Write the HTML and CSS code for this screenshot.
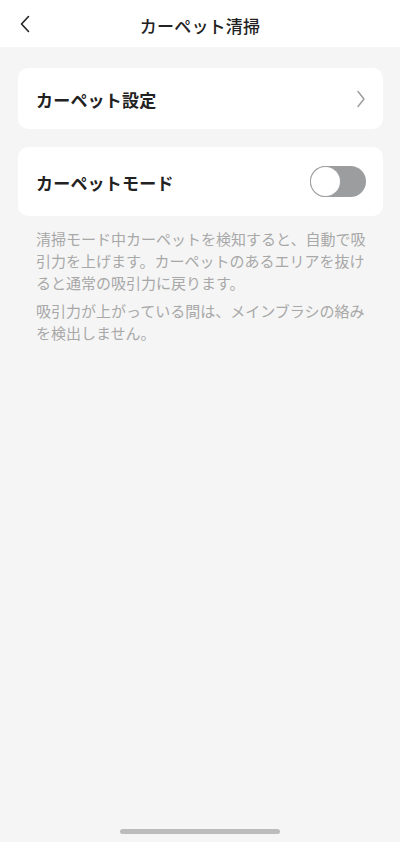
FILE: index.html
```html
<!DOCTYPE html>
<html lang="ja">
<head>
    <meta charset="UTF-8">
    <meta name="viewport" content="width=device-width, initial-scale=1.0">
    <title>カーペット清掃</title>
    <link rel="stylesheet" href="styles.css">
</head>
<body>

    <div class="screen">
        <header class="topbar">
            <span class="back">
                <svg width="12" height="18" viewBox="0 0 12 18">
                    <path d="M9.5 1.5 L2.5 9 L9.5 16.5" fill="none" stroke="#222" stroke-width="1.6" stroke-linecap="round" stroke-linejoin="round"/>
                </svg>
            </span>
            <h1>カーペット清掃</h1>
        </header>

        <main class="content">
            <div class="card card-link">
                <span class="card-label">カーペット設定</span>
                <svg class="arrow" width="10" height="18" viewBox="0 0 10 18">
                    <path d="M2 1.5 L8 9 L2 16.5" fill="none" stroke="#9a9a9a" stroke-width="1.4" stroke-linecap="round" stroke-linejoin="round"/>
                </svg>
            </div>

            <div class="card card-toggle">
                <span class="card-label">カーペットモード</span>
                <span class="switch"><span class="knob"></span></span>
            </div>

            <div class="note">
                <p>清掃モード中カーペットを検知すると、自動で吸引力を上げます。カーペットのあるエリアを抜けると通常の吸引力に戻ります。</p>
                <p>吸引力が上がっている間は、メインブラシの絡みを検出しません。</p>
            </div>
        </main>

        <div class="home-bar"></div>
    </div>

</body>
</html>
```

FILE: styles.css
```css
body {
    margin: 0;
    padding: 0;
    background: #f5f5f5;
    color: #222;
    font-family: "Noto Sans CJK JP", "Noto Sans", sans-serif;
}

.screen {
    min-height: 842px;
    display: flex;
    flex-direction: column;
}

.topbar {
    height: 47px;
    background: #fff;
    display: flex;
    align-items: center;
    justify-content: center;
    position: relative;
}

.back {
    position: absolute;
    left: 19px;
    top: 15px;
    display: flex;
}

.topbar h1 {
    margin: 0;
    font-size: 17px;
    font-weight: 500;
    letter-spacing: 0.2px;
    padding-top: 3px;
}

.content {
    padding: 21px 17px 0 18px;
}

.card {
    background: #fff;
    border-radius: 10px;
    display: flex;
    align-items: center;
    justify-content: space-between;
    padding: 0 17px 0 18px;
}

.card-link {
    height: 61px;
    margin-bottom: 18px;
}

.card-toggle {
    height: 69px;
}

.card-label {
    font-size: 17px;
    font-weight: 700;
    letter-spacing: 0.2px;
    padding-top: 1px;
}

.switch {
    width: 56px;
    height: 31px;
    border-radius: 16px;
    background: #9b9d9f;
    display: flex;
    align-items: center;
    padding-left: 1px;
    box-sizing: border-box;
}

.knob {
    width: 29px;
    height: 29px;
    border-radius: 50%;
    background: #fff;
    box-shadow: 0 0 0 1px #a0a2a4;
}

.note {
    padding: 12px 0 0 18px;
    width: 334px;
    color: #a8a8a8;
    font-size: 15px;
    line-height: 22px;
}

.note p {
    margin: 0 0 6px 0;
}

.home-bar {
    width: 160px;
    height: 5px;
    border-radius: 3px;
    background: #bcbcbc;
    margin: auto auto 8px auto;
}
```
